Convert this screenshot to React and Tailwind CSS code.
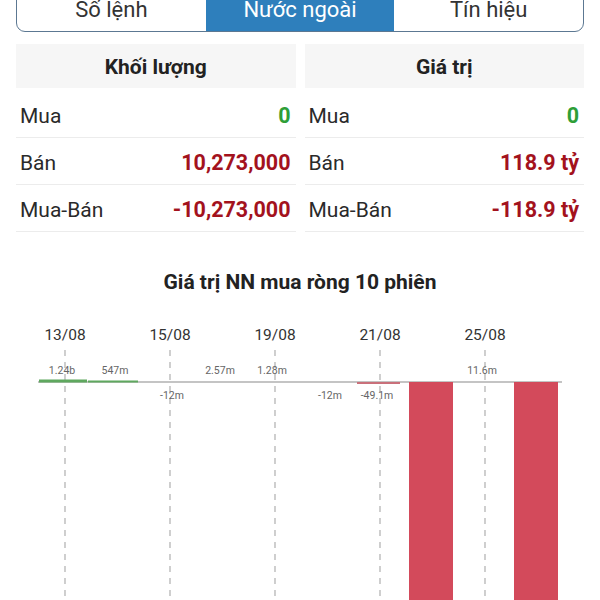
import React from "react";

const font = { fontFamily: "Roboto, 'Noto Sans', sans-serif" };

function Row({ label, value, color }) {
  return (
    <div className="flex h-[47px] items-center justify-between border-b border-[#ececec] pl-[4px] pr-[5px] pt-[5px]">
      <span className="text-[21px] text-[#2a2a2a]">{label}</span>
      <span className={`text-[21.5px] font-bold ${color}`}>{value}</span>
    </div>
  );
}

function Panel({ title, rows }) {
  return (
    <div className="flex flex-1 flex-col">
      <div className="flex h-[44px] items-center justify-center bg-[#f6f6f6] pt-[3px] text-[21px] font-bold text-[#222]">
        {title}
      </div>
      <div className="mt-[3px]">
        {rows.map((r, i) => (
          <Row key={i} {...r} />
        ))}
      </div>
    </div>
  );
}

function Chart() {
  const dates = ["13/08", "15/08", "19/08", "21/08", "25/08"];
  const xs = [65, 170, 275, 380, 485];
  const labels = [
    { x: 62, t: "1.24b", y: 64 },
    { x: 115, t: "547m", y: 64 },
    { x: 172, t: "-12m", y: 89 },
    { x: 220, t: "2.57m", y: 64 },
    { x: 272, t: "1.28m", y: 64 },
    { x: 330, t: "-12m", y: 89 },
    { x: 377, t: "-49.1m", y: 89 },
    { x: 482, t: "11.6m", y: 64 },
  ];
  return (
    <svg width="600" height="300" className="block" style={font}>
      {xs.map((x, i) => (
        <g key={i}>
          <text x={x} y={30} textAnchor="middle" fontSize="15.5" fill="#333">
            {dates[i]}
          </text>
          <line x1={x} y1={40} x2={x} y2={300} stroke="#b5b5b5" strokeWidth="1.3" strokeDasharray="6 6" />
        </g>
      ))}
      <line x1={38} y1={72} x2={562} y2={72} stroke="#b0b0b0" strokeWidth="1.5" />
      <rect x={39} y={69.5} width={48} height={3} fill="#5fa85f" />
      <rect x={88} y={70.5} width={50} height={2} fill="#5fa85f" />
      <rect x={357} y={72} width={43} height={2} fill="#c9707a" />
      <rect x={409} y={72} width={44} height={230} fill="#d34a5b" />
      <rect x={514} y={72} width={44} height={230} fill="#d34a5b" />
      {labels.map((l, i) => (
        <text key={i} x={l.x} y={l.y} textAnchor="middle" fontSize="10.5" fill="#666">
          {l.t}
        </text>
      ))}
    </svg>
  );
}

export default function App() {
  const green = "text-[#2e9e37]";
  const red = "text-[#a3121d]";
  return (
    <div className="h-[600px] w-[600px] overflow-hidden bg-white" style={font}>
      <div className="mx-[16px] -mt-[14px] flex h-[46px] overflow-hidden rounded-b-[9px] border border-[#5c7892] text-[22px]">
        <div className="flex flex-1 items-center justify-center text-[#333]">Số lệnh</div>
        <div className="flex flex-1 items-center justify-center bg-[#2e7fbc] text-white">Nước ngoài</div>
        <div className="flex flex-1 items-center justify-center text-[#333]">Tín hiệu</div>
      </div>
      <div className="mx-[16px] mt-[12px] flex gap-[9px]">
        <Panel
          title="Khối lượng"
          rows={[
            { label: "Mua", value: "0", color: green },
            { label: "Bán", value: "10,273,000", color: red },
            { label: "Mua-Bán", value: "-10,273,000", color: red },
          ]}
        />
        <Panel
          title="Giá trị"
          rows={[
            { label: "Mua", value: "0", color: green },
            { label: "Bán", value: "118.9 tỷ", color: red },
            { label: "Mua-Bán", value: "-118.9 tỷ", color: red },
          ]}
        />
      </div>
      <div className="mt-[35px] text-center text-[21px] font-bold text-[#222]">Giá trị NN mua ròng 10 phiên</div>
      <div className="mt-[11px]">
        <Chart />
      </div>
    </div>
  );
}
